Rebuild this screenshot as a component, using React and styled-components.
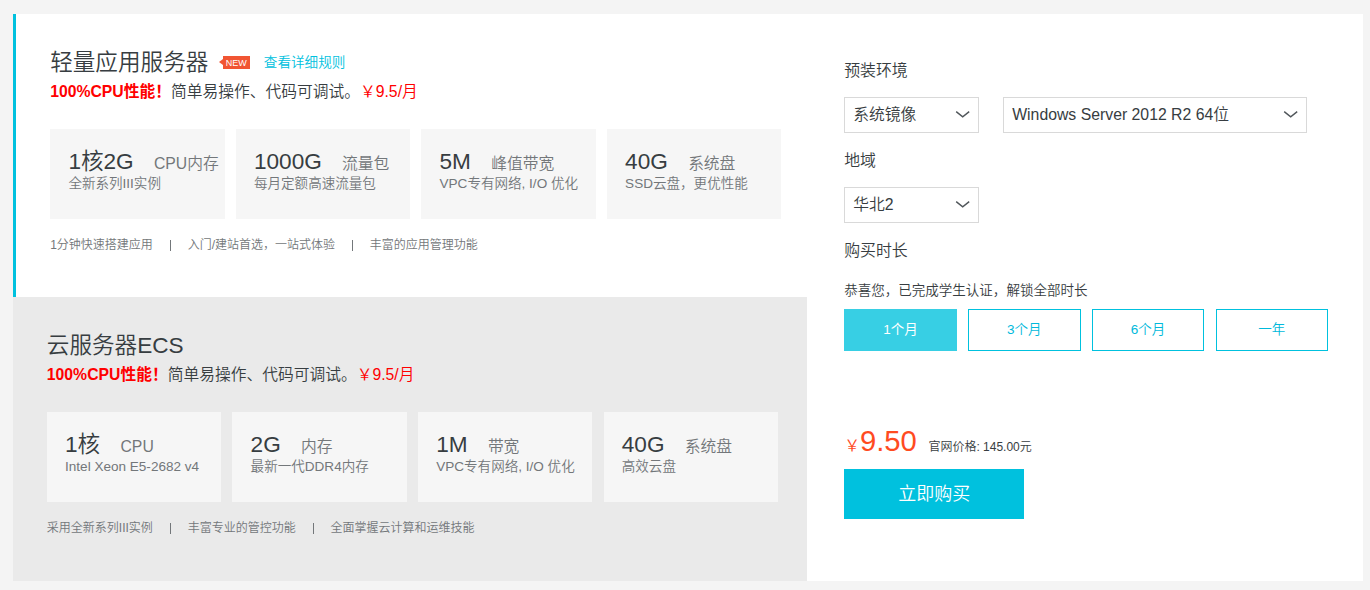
import React from "react";
import styled, { createGlobalStyle } from "styled-components";

const GlobalStyle = createGlobalStyle`
  * { box-sizing: border-box; }
  body {
    margin: 0;
    background: #f4f4f4;
    color: #373d41;
    font-family: "Liberation Sans", "Noto Sans CJK SC", sans-serif;
    font-weight: 350;
    white-space: nowrap;
  }
`;

const Page = styled.main`
  display: flex;
  width: 1370px;
  height: 590px;
  padding: 14px 7px 9px 13px;
`;

const Plans = styled.div`
  display: flex;
  flex-direction: column;
  width: 794px;
`;

const Plan = styled.section`
  height: ${(p) => (p.$active ? 283 : 284)}px;
  padding: 34px 0 0 ${(p) => (p.$active ? 34.2 : 33.85)}px;
  background: ${(p) => (p.$active ? "#fff" : "#eaeaea")};
  border-left: ${(p) => (p.$active ? "3px solid #00c1de" : "0")};
`;

const TitleRow = styled.div`
  display: flex;
  align-items: center;
  height: 30px;
`;

const Title = styled.h2`
  margin: 0;
  font-size: 22.6px;
  font-weight: 350;
  line-height: 30px;
`;

const NewTag = styled.span`
  position: relative;
  width: 27px;
  height: 13px;
  margin: -1px 14px 0 14.5px;
  background: #f15533;
  color: #fff;
  font-size: 9px;
  line-height: 14px;
  text-align: center;

  &::before {
    content: "";
    position: absolute;
    left: -4px;
    top: 3px;
    border: solid transparent;
    border-width: 3.5px 4px 3.5px 0;
    border-right-color: #f15533;
  }
`;

const RulesLink = styled.a`
  color: #00c1de;
  font-size: 13.6px;
  line-height: 28px;
`;

const Summary = styled.p`
  margin: 0;
  font-size: 15.75px;
  line-height: 28px;
`;

const Highlight = styled.span`
  color: #f00;
  font-weight: ${(p) => (p.$bold ? 700 : 350)};
`;

const Specs = styled.div`
  display: grid;
  grid-template-columns: repeat(4, 174.4px);
  column-gap: 11.2px;
  margin-top: 23px;
`;

const SpecCard = styled.div`
  height: 90px;
  padding: 17px 0 0 18.2px;
  background: #f6f6f6;
`;

const SpecHead = styled.div`
  display: flex;
  align-items: baseline;
  gap: 20.3px;
  height: 28px;
  line-height: 31px;
`;

const SpecValue = styled.span`
  font-size: 22.6px;
`;

const SpecName = styled.span`
  color: #73777a;
  font-size: 15.75px;
`;

const SpecNote = styled.div`
  color: #73777a;
  font-size: 13.55px;
  line-height: 20px;
`;

const Features = styled.div`
  display: flex;
  align-items: center;
  margin-top: 17px;
  color: #73777a;
  font-size: 12px;
  line-height: 18px;
`;

const Feature = styled.span`
  & + & {
    display: flex;
    align-items: center;
  }
  & + &::before {
    content: "";
    width: 1px;
    height: 11px;
    margin: 0 16.8px 0 17px;
    background: #73777a;
  }
`;

const Order = styled.section`
  flex: 1;
  padding: 43px 0 0 37.2px;
  background: #fff;
`;

const FieldLabel = styled.div`
  height: 40px;
  font-size: 15.9px;
  line-height: 28px;
`;

const SelectRow = styled.div`
  display: flex;
  gap: 24px;
  height: 50px;
`;

const SelectBox = styled.div`
  display: flex;
  align-items: center;
  justify-content: space-between;
  width: ${(p) => p.$width}px;
  height: 36px;
  padding: 0 8px;
  border: 1px solid #d9d9d9;
  font-size: 15.8px;
  line-height: 34px;
`;

const Notice = styled.div`
  margin-top: 4px;
  font-size: 13.52px;
  line-height: 20px;
`;

const Durations = styled.div`
  display: grid;
  grid-template-columns: repeat(4, 112.65px);
  column-gap: 11.15px;
  margin-top: 8px;
`;

const Duration = styled.button`
  height: 42px;
  padding: 0;
  border: 1px solid ${(p) => (p.$active ? "#37cfe4" : "#00c1de")};
  background: ${(p) => (p.$active ? "#37cfe4" : "#fff")};
  color: ${(p) => (p.$active ? "#fff" : "#00b9db")};
  font-family: inherit;
  font-size: 13.5px;
  font-weight: ${(p) => (p.$active ? 400 : 350)};
  line-height: 38px;
`;

const PriceRow = styled.div`
  display: flex;
  align-items: baseline;
  height: 44px;
  margin-top: 74px;
  line-height: 32px;
`;

const Currency = styled.span`
  color: #ff4b1f;
  font-size: 15.75px;
`;

const Amount = styled.span`
  margin-right: 11.5px;
  color: #ff4b1f;
  font-size: 29.25px;
`;

const ListPrice = styled.span`
  font-size: 12px;
`;

const BuyButton = styled.button`
  display: block;
  width: 180px;
  height: 50px;
  padding: 0;
  border: 0;
  background: #00c1de;
  color: #fff;
  font-family: inherit;
  font-size: 18px;
  font-weight: 350;
  line-height: 50px;
`;

const Chevron = () => (
  <svg width="15" height="8" viewBox="0 0 15 8" fill="none" stroke="#50565a" strokeWidth="1.4">
    <path d="M1.2 0.6L7.7 5.9L14.2 0.6" />
  </svg>
);

const Select = ({ width, children }) => (
  <SelectBox $width={width}>
    <span>{children}</span>
    <Chevron />
  </SelectBox>
);

const plans = [
  {
    title: "轻量应用服务器",
    active: true,
    specs: [
      ["1核2G", "CPU内存", "全新系列III实例"],
      ["1000G", "流量包", "每月定额高速流量包"],
      ["5M", "峰值带宽", "VPC专有网络, I/O 优化"],
      ["40G", "系统盘", "SSD云盘，更优性能"],
    ],
    features: ["1分钟快速搭建应用", "入门/建站首选，一站式体验", "丰富的应用管理功能"],
  },
  {
    title: "云服务器ECS",
    active: false,
    specs: [
      ["1核", "CPU", "Intel Xeon E5-2682 v4"],
      ["2G", "内存", "最新一代DDR4内存"],
      ["1M", "带宽", "VPC专有网络, I/O 优化"],
      ["40G", "系统盘", "高效云盘"],
    ],
    features: ["采用全新系列III实例", "丰富专业的管控功能", "全面掌握云计算和运维技能"],
  },
];

const durations = ["1个月", "3个月", "6个月", "一年"];

export default function App() {
  return (
    <>
      <GlobalStyle />
      <Page lang="zh-CN">
        <Plans>
          {plans.map((plan) => (
            <Plan key={plan.title} $active={plan.active}>
              <TitleRow>
                <Title>{plan.title}</Title>
                {plan.active && (
                  <>
                    <NewTag>NEW</NewTag>
                    <RulesLink>查看详细规则</RulesLink>
                  </>
                )}
              </TitleRow>
              <Summary>
                <Highlight $bold>100%CPU性能！</Highlight>
                简单易操作、代码可调试。
                <Highlight>￥9.5/月</Highlight>
              </Summary>
              <Specs>
                {plan.specs.map(([value, name, note]) => (
                  <SpecCard key={value}>
                    <SpecHead>
                      <SpecValue>{value}</SpecValue>
                      <SpecName>{name}</SpecName>
                    </SpecHead>
                    <SpecNote>{note}</SpecNote>
                  </SpecCard>
                ))}
              </Specs>
              <Features>
                {plan.features.map((f) => (
                  <Feature key={f}>{f}</Feature>
                ))}
              </Features>
            </Plan>
          ))}
        </Plans>
        <Order>
          <FieldLabel>预装环境</FieldLabel>
          <SelectRow>
            <Select width={135}>系统镜像</Select>
            <Select width={304}>Windows Server 2012 R2 64位</Select>
          </SelectRow>
          <FieldLabel>地域</FieldLabel>
          <SelectRow>
            <Select width={135}>华北2</Select>
          </SelectRow>
          <FieldLabel>购买时长</FieldLabel>
          <Notice>恭喜您，已完成学生认证，解锁全部时长</Notice>
          <Durations>
            {durations.map((d, i) => (
              <Duration key={d} $active={i === 0}>{d}</Duration>
            ))}
          </Durations>
          <PriceRow>
            <Currency>￥</Currency>
            <Amount>9.50</Amount>
            <ListPrice>官网价格: 145.00元</ListPrice>
          </PriceRow>
          <BuyButton>立即购买</BuyButton>
        </Order>
      </Page>
    </>
  );
}
